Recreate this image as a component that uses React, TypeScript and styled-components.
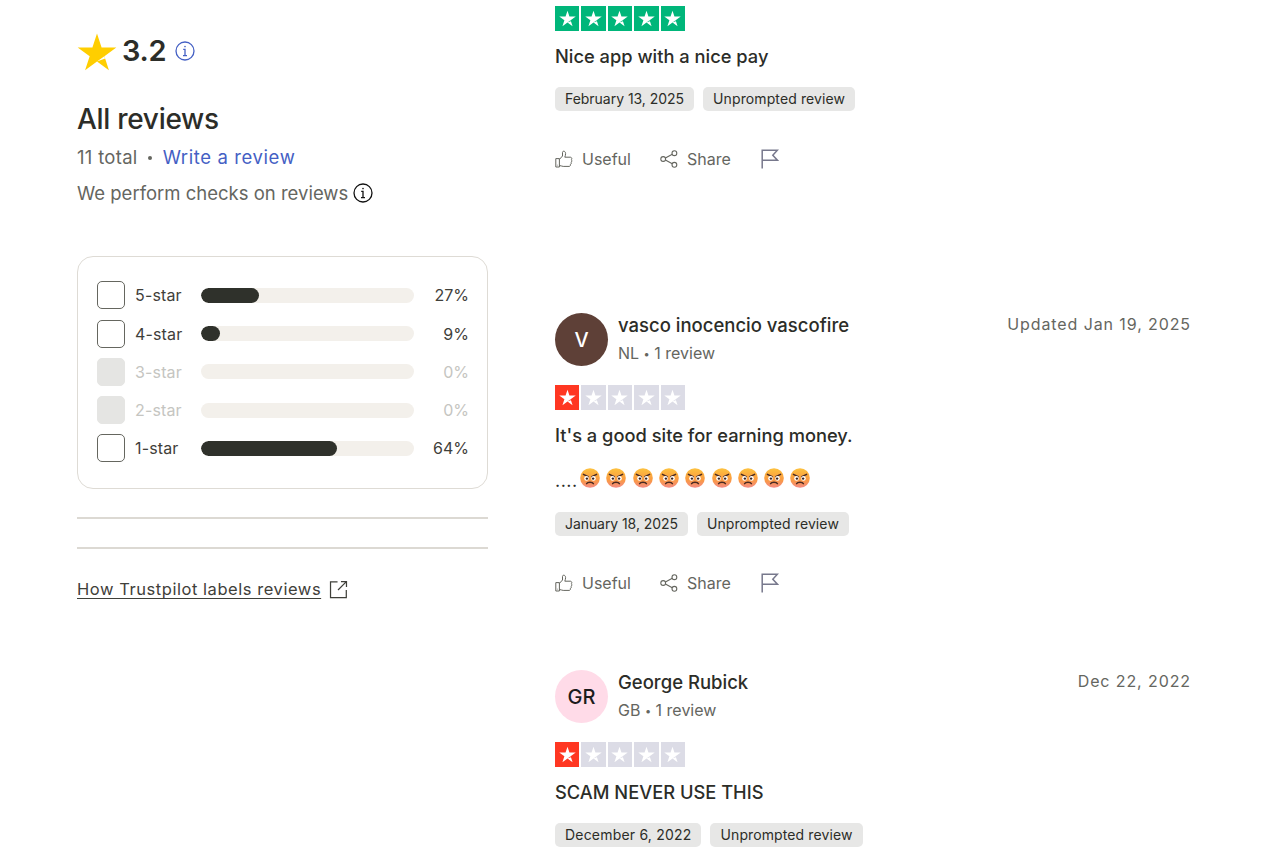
import React from "react";
import styled, { createGlobalStyle } from "styled-components";

const Global = createGlobalStyle`
  html, body { margin: 0; padding: 0; background: #fff; }
  body { font-family: Inter, "Liberation Sans", sans-serif; color: #2c2d28; }
`;

const Page = styled.div`
  width: 1280px;
  height: 856px;
  overflow: hidden;
  display: grid;
  grid-template-columns: 411px 636px;
  column-gap: 67px;
  padding-left: 77px;
  box-sizing: border-box;
`;

const Side = styled.aside`
  display: flex;
  flex-direction: column;
  padding-top: 32px;
`;

const ScoreRow = styled.div`
  display: flex;
  align-items: center;
  height: 40px;
`;
const Score = styled.span`
  font-size: 29px;
  line-height: 38px;
  padding-bottom: 2px;
  font-weight: 600;
  margin-left: 5px;
  letter-spacing: -0.3px;
`;
const InfoBlue = styled.span`
  display: inline-flex;
  margin-left: 9px;
  padding-bottom: 2px;
  color: #4460c4;
`;
const Heading = styled.h2`
  margin: 29px 0 0;
  font-size: 28px;
  line-height: 36px;
  font-weight: 500;
  letter-spacing: -0.3px;
`;
const TotalRow = styled.div`
  margin-top: 7px;
  display: flex;
  align-items: center;
  font-size: 18.5px;
  line-height: 26px;
  color: #65665f;
  letter-spacing: 0.3px;
`;
const Dot = styled.span`
  width: 4px;
  height: 4px;
  border-radius: 50%;
  background: #65665f;
  margin: 2px 11px 0 10px;
`;
const WriteLink = styled.a`
  color: #4460c4;
  letter-spacing: 0.6px;
`;
const CheckRow = styled.div`
  margin-top: 10px;
  display: flex;
  align-items: center;
  gap: 5px;
  font-size: 18.5px;
  line-height: 26px;
  color: #65665f;
`;

const FilterCard = styled.div`
  margin-top: 50px;
  border: 1px solid #dedbd5;
  border-radius: 16px;
  box-sizing: border-box;
  height: 233px;
  padding: 24px 18px 0 19px;
  display: flex;
  flex-direction: column;
  gap: 9.75px;
`;
const FilterRow = styled.div<{ $off?: boolean }>`
  display: grid;
  grid-template-columns: 28px 56px 213px 1fr;
  column-gap: 10px;
  align-items: center;
  height: 28.5px;
  font-size: 16px;
  letter-spacing: 0.15px;
  color: ${(p) => (p.$off ? "#c5c5c1" : "#3f403a")};
`;
const Check = styled.span<{ $off?: boolean }>`
  width: 28px;
  height: 28px;
  box-sizing: border-box;
  border-radius: 5px;
  border: 1px solid ${(p) => (p.$off ? "#e5e5e3" : "#65665f")};
  background: ${(p) => (p.$off ? "#e5e5e3" : "#fff")};
`;
const Track = styled.div`
  height: 15px;
  border-radius: 8px;
  background: #f3f0eb;
  overflow: hidden;
`;
const Fill = styled.div`
  height: 100%;
  border-radius: 8px;
  background: #2f312b;
`;
const Pct = styled.span`
  text-align: right;
  letter-spacing: 0;
`;
const Rule = styled.hr<{ $top: number }>`
  margin: ${(p) => p.$top}px 0 0;
  border: 0;
  height: 2px;
  background: #dcd9d3;
`;
const LabelsLink = styled.a`
  margin-top: 28px;
  display: flex;
  align-items: center;
  gap: 8px;
  font-size: 16.5px;
  line-height: 24px;
  letter-spacing: 0.55px;
  color: #3f403a;
  span { text-decoration: underline; text-underline-offset: 3px; }
`;

const Feed = styled.main`
  display: flex;
  flex-direction: column;
  padding-top: 6px;
`;
const Review = styled.article<{ $gap?: number }>`
  margin-top: ${(p) => p.$gap ?? 0}px;
`;
const Head = styled.header`
  display: flex;
  margin-bottom: 19px;
`;
const Avatar = styled.div<{ $bg: string; $fg: string }>`
  width: 53px;
  height: 53px;
  border-radius: 50%;
  flex: none;
  display: flex;
  align-items: center;
  justify-content: center;
  background: ${(p) => p.$bg};
  color: ${(p) => p.$fg};
  font-size: 20px;
  font-weight: 500;
`;
const Who = styled.div`
  margin-left: 10px;
  flex: 1;
`;
const Name = styled.div`
  font-size: 18.5px;
  line-height: 24px;
  font-weight: 500;
`;
const Meta = styled.div`
  margin-top: 5px;
  font-size: 16px;
  line-height: 22px;
  color: #65665f;
`;
const Bullet = styled.span`
  font-size: 11px;
  margin: 0 4.5px;
  vertical-align: 1px;
`;
const When = styled.div`
  font-size: 16px;
  line-height: 22px;
  color: #65665f;
  letter-spacing: 0.9px;
`;
const Stars = styled.div`
  display: flex;
  gap: 2px;
  width: 130px;
`;
const StarBox = styled.div<{ $c: string }>`
  width: 24.4px;
  height: 25px;
  background: ${(p) => p.$c};
  display: flex;
  align-items: center;
  justify-content: center;
`;
const Title = styled.h3`
  margin: 12px 0 0;
  font-size: 18.3px;
  line-height: 26px;
  font-weight: 500;
`;
const Body = styled.div`
  margin-top: 18px;
  height: 24px;
  display: flex;
  align-items: center;
  font-size: 18px;
  gap: 6.3px;
`;
const Dots = styled.span`
  letter-spacing: 0.5px;
  margin-right: -4px;
  padding-top: 4px;
`;
const Tags = styled.div<{ $top: number }>`
  margin-top: ${(p) => p.$top}px;
  display: flex;
  gap: 9px;
`;
const Tag = styled.span<{ $track?: number }>`
  height: 24px;
  line-height: 24px;
  padding: 0 10px;
  border-radius: 5px;
  background: #e7e7e6;
  font-size: 14px;
  letter-spacing: ${(p) => p.$track ?? 0.11}px;
  color: #2c2d28;
`;
const Actions = styled.div<{ $top: number }>`
  margin-top: ${(p) => p.$top}px;
  display: flex;
  align-items: center;
  height: 24px;
  font-size: 16px;
  color: #65665f;
`;
const Action = styled.span<{ $w: number }>`
  display: inline-flex;
  align-items: center;
  width: ${(p) => p.$w}px;
  gap: 9px;
`;

const StarShape = ({ size, fill, notch }: { size: number; fill: string; notch: string }) => (
  <svg width={size} height={size} viewBox="0 0 24 24" aria-hidden>
    <path fill={fill} d="M12 .9l2.75 8.4h8.85l-7.15 5.2 2.7 8.4-7.15-5.2-7.15 5.2 2.75-8.4L.4 9.3h8.85z" />
    <path fill={notch} d="M12 17.7l4.4-3.2.45 1.4z" />
  </svg>
);

const InfoIcon = ({ size, color }: { size: number; color: string }) => (
  <svg width={size} height={size} viewBox="0 0 20 20" fill="none" stroke={color} strokeWidth="1.3">
    <circle cx="10" cy="10" r="9" />
    <path d="M8.2 8.4h1.8V14.6M8 14.7h4" />
    <circle cx="10" cy="5.6" r="0.8" fill={color} stroke="none" />
  </svg>
);

const ThumbIcon = () => (
  <svg width="18" height="18" viewBox="0 0 18 18" fill="none" stroke="#65665f" strokeWidth="1" strokeLinejoin="round">
    <path d="M.8 8.6h3.6v8.4H.8z" />
    <path d="M4.4 9.4l3.1-3.4V2.4c0-.8.6-1.2 1.2-1.2 1.1 0 1.9 1 1.9 2.4 0 1.3-.4 2.5-.8 3.6h5.4c1 0 1.6.7 1.6 1.5 0 .5-.2.9-.6 1.2.5.3.7.8.6 1.3-.1.5-.4.9-.8 1.1.3.4.4.9.2 1.4-.2.4-.5.7-.9.8.2.4.2.8 0 1.2-.3.5-.8.7-1.3.7H8.2c-1.5 0-2.4-.9-3.8-.9" />
    <path d="M2.4 14.8v.6" />
  </svg>
);

const ShareIcon = () => (
  <svg width="18" height="18" viewBox="0 0 18 18" fill="none" stroke="#65665f" strokeWidth="1.1">
    <circle cx="3.2" cy="9" r="2.4" />
    <circle cx="14.4" cy="3.2" r="2.4" />
    <circle cx="14.4" cy="14.8" r="2.4" />
    <path d="M5.4 8l6.9-3.7M5.4 10l6.9 3.7" />
  </svg>
);

const FlagIcon = () => (
  <svg width="18" height="20" viewBox="0 0 18 20" fill="none" stroke="#77788c" strokeWidth="1.5">
    <path d="M1.2 19.5V1.2h15.2l-4.6 5 4.6 5H1.2" />
  </svg>
);

const ExternalIcon = () => (
  <svg width="19" height="19" viewBox="0 0 20 20" fill="none" stroke="#3f403a" strokeWidth="1.3">
    <path d="M9 2H1.6v16.6h16.6V10.5" />
    <path d="M9.5 10.5L18 2M12.6 1.6h5.8v5.8" />
  </svg>
);

const AngryEmoji = () => (
  <svg width="20" height="20" viewBox="0 0 20 20">
    <defs>
      <linearGradient id="angryFace" x1="0" y1="0" x2="0" y2="1">
        <stop offset="0%" stopColor="#fdc23e" />
        <stop offset="60%" stopColor="#fa9a42" />
        <stop offset="100%" stopColor="#f38a84" />
      </linearGradient>
    </defs>
    <circle cx="10" cy="10" r="9.8" fill="url(#angryFace)" />
    <path d="M3.4 6.4l4.8 2.3M16.6 6.4l-4.8 2.3" stroke="#4a2a22" strokeWidth="1.5" strokeLinecap="round" />
    <circle cx="6.5" cy="10.4" r="2.3" fill="#fff" />
    <circle cx="13.5" cy="10.4" r="2.3" fill="#fff" />
    <circle cx="6.9" cy="10.6" r="1.2" fill="#3a2320" />
    <circle cx="13.1" cy="10.6" r="1.2" fill="#3a2320" />
    <path d="M6.6 15.6c1-1.8 5.8-1.8 6.8 0" fill="none" stroke="#4a2a22" strokeWidth="1.5" strokeLinecap="round" />
  </svg>
);

const StarRating = ({ value }: { value: number }) => {
  const on = value === 5 ? "#00b67a" : "#ff3722";
  return (
    <Stars>
      {[1, 2, 3, 4, 5].map((n) => {
        const c = n <= value ? on : "#dcdce6";
        return (
          <StarBox key={n} $c={c}>
            <StarShape size={17} fill="#fff" notch={c} />
          </StarBox>
        );
      })}
    </Stars>
  );
};

const ActionBar = ({ top }: { top: number }) => (
  <Actions $top={top}>
    <Action $w={105}><ThumbIcon />Useful</Action>
    <Action $w={101}><ShareIcon />Share</Action>
    <FlagIcon />
  </Actions>
);

const bars = [
  { label: "5-star", pct: 27 },
  { label: "4-star", pct: 9 },
  { label: "3-star", pct: 0 },
  { label: "2-star", pct: 0 },
  { label: "1-star", pct: 64 },
];

export default function App() {
  return (
    <Page>
      <Global />
      <Side>
        <ScoreRow>
          <StarShape size={40} fill="#ffce00" notch="#ffffff" />
          <Score>3.2</Score>
          <InfoBlue><InfoIcon size={20} color="#4460c4" /></InfoBlue>
        </ScoreRow>
        <Heading>All reviews</Heading>
        <TotalRow>
          11 total<Dot /><WriteLink>Write a review</WriteLink>
        </TotalRow>
        <CheckRow>
          We perform checks on reviews <InfoIcon size={20} color="#111" />
        </CheckRow>
        <FilterCard>
          {bars.map((b) => (
            <FilterRow key={b.label} $off={b.pct === 0}>
              <Check $off={b.pct === 0} />
              <span>{b.label}</span>
              <Track>{b.pct > 0 && <Fill style={{ width: `${b.pct}%` }} />}</Track>
              <Pct>{b.pct}%</Pct>
            </FilterRow>
          ))}
        </FilterCard>
        <Rule $top={28} />
        <Rule $top={28} />
        <LabelsLink>
          <span>How Trustpilot labels reviews</span>
          <ExternalIcon />
        </LabelsLink>
      </Side>
      <Feed>
        <Review>
          <StarRating value={5} />
          <Title>Nice app with a nice pay</Title>
          <Tags $top={18}>
            <Tag $track={-0.03}>February 13, 2025</Tag>
            <Tag>Unprompted review</Tag>
          </Tags>
          <ActionBar top={36} />
        </Review>
        <Review $gap={142}>
          <Head>
            <Avatar $bg="#5e4037" $fg="#fff">V</Avatar>
            <Who>
              <Name>vasco inocencio vascofire</Name>
              <Meta>NL<Bullet>•</Bullet>1 review</Meta>
            </Who>
            <When>Updated Jan 19, 2025</When>
          </Head>
          <StarRating value={1} />
          <Title>It's a good site for earning money.</Title>
          <Body>
            <Dots>....</Dots>
            {Array.from({ length: 9 }).map((_, i) => <AngryEmoji key={i} />)}
          </Body>
          <Tags $top={22}>
            <Tag $track={-0.07}>January 18, 2025</Tag>
            <Tag>Unprompted review</Tag>
          </Tags>
          <ActionBar top={35} />
        </Review>
        <Review $gap={75}>
          <Head>
            <Avatar $bg="#ffdbe8" $fg="#1c1c1c">GR</Avatar>
            <Who>
              <Name>George Rubick</Name>
              <Meta>GB<Bullet>•</Bullet>1 review</Meta>
            </Who>
            <When>Dec 22, 2022</When>
          </Head>
          <StarRating value={1} />
          <Title>SCAM NEVER USE THIS</Title>
          <Tags $top={18}>
            <Tag $track={0.2}>December 6, 2022</Tag>
            <Tag>Unprompted review</Tag>
          </Tags>
        </Review>
      </Feed>
    </Page>
  );
}
